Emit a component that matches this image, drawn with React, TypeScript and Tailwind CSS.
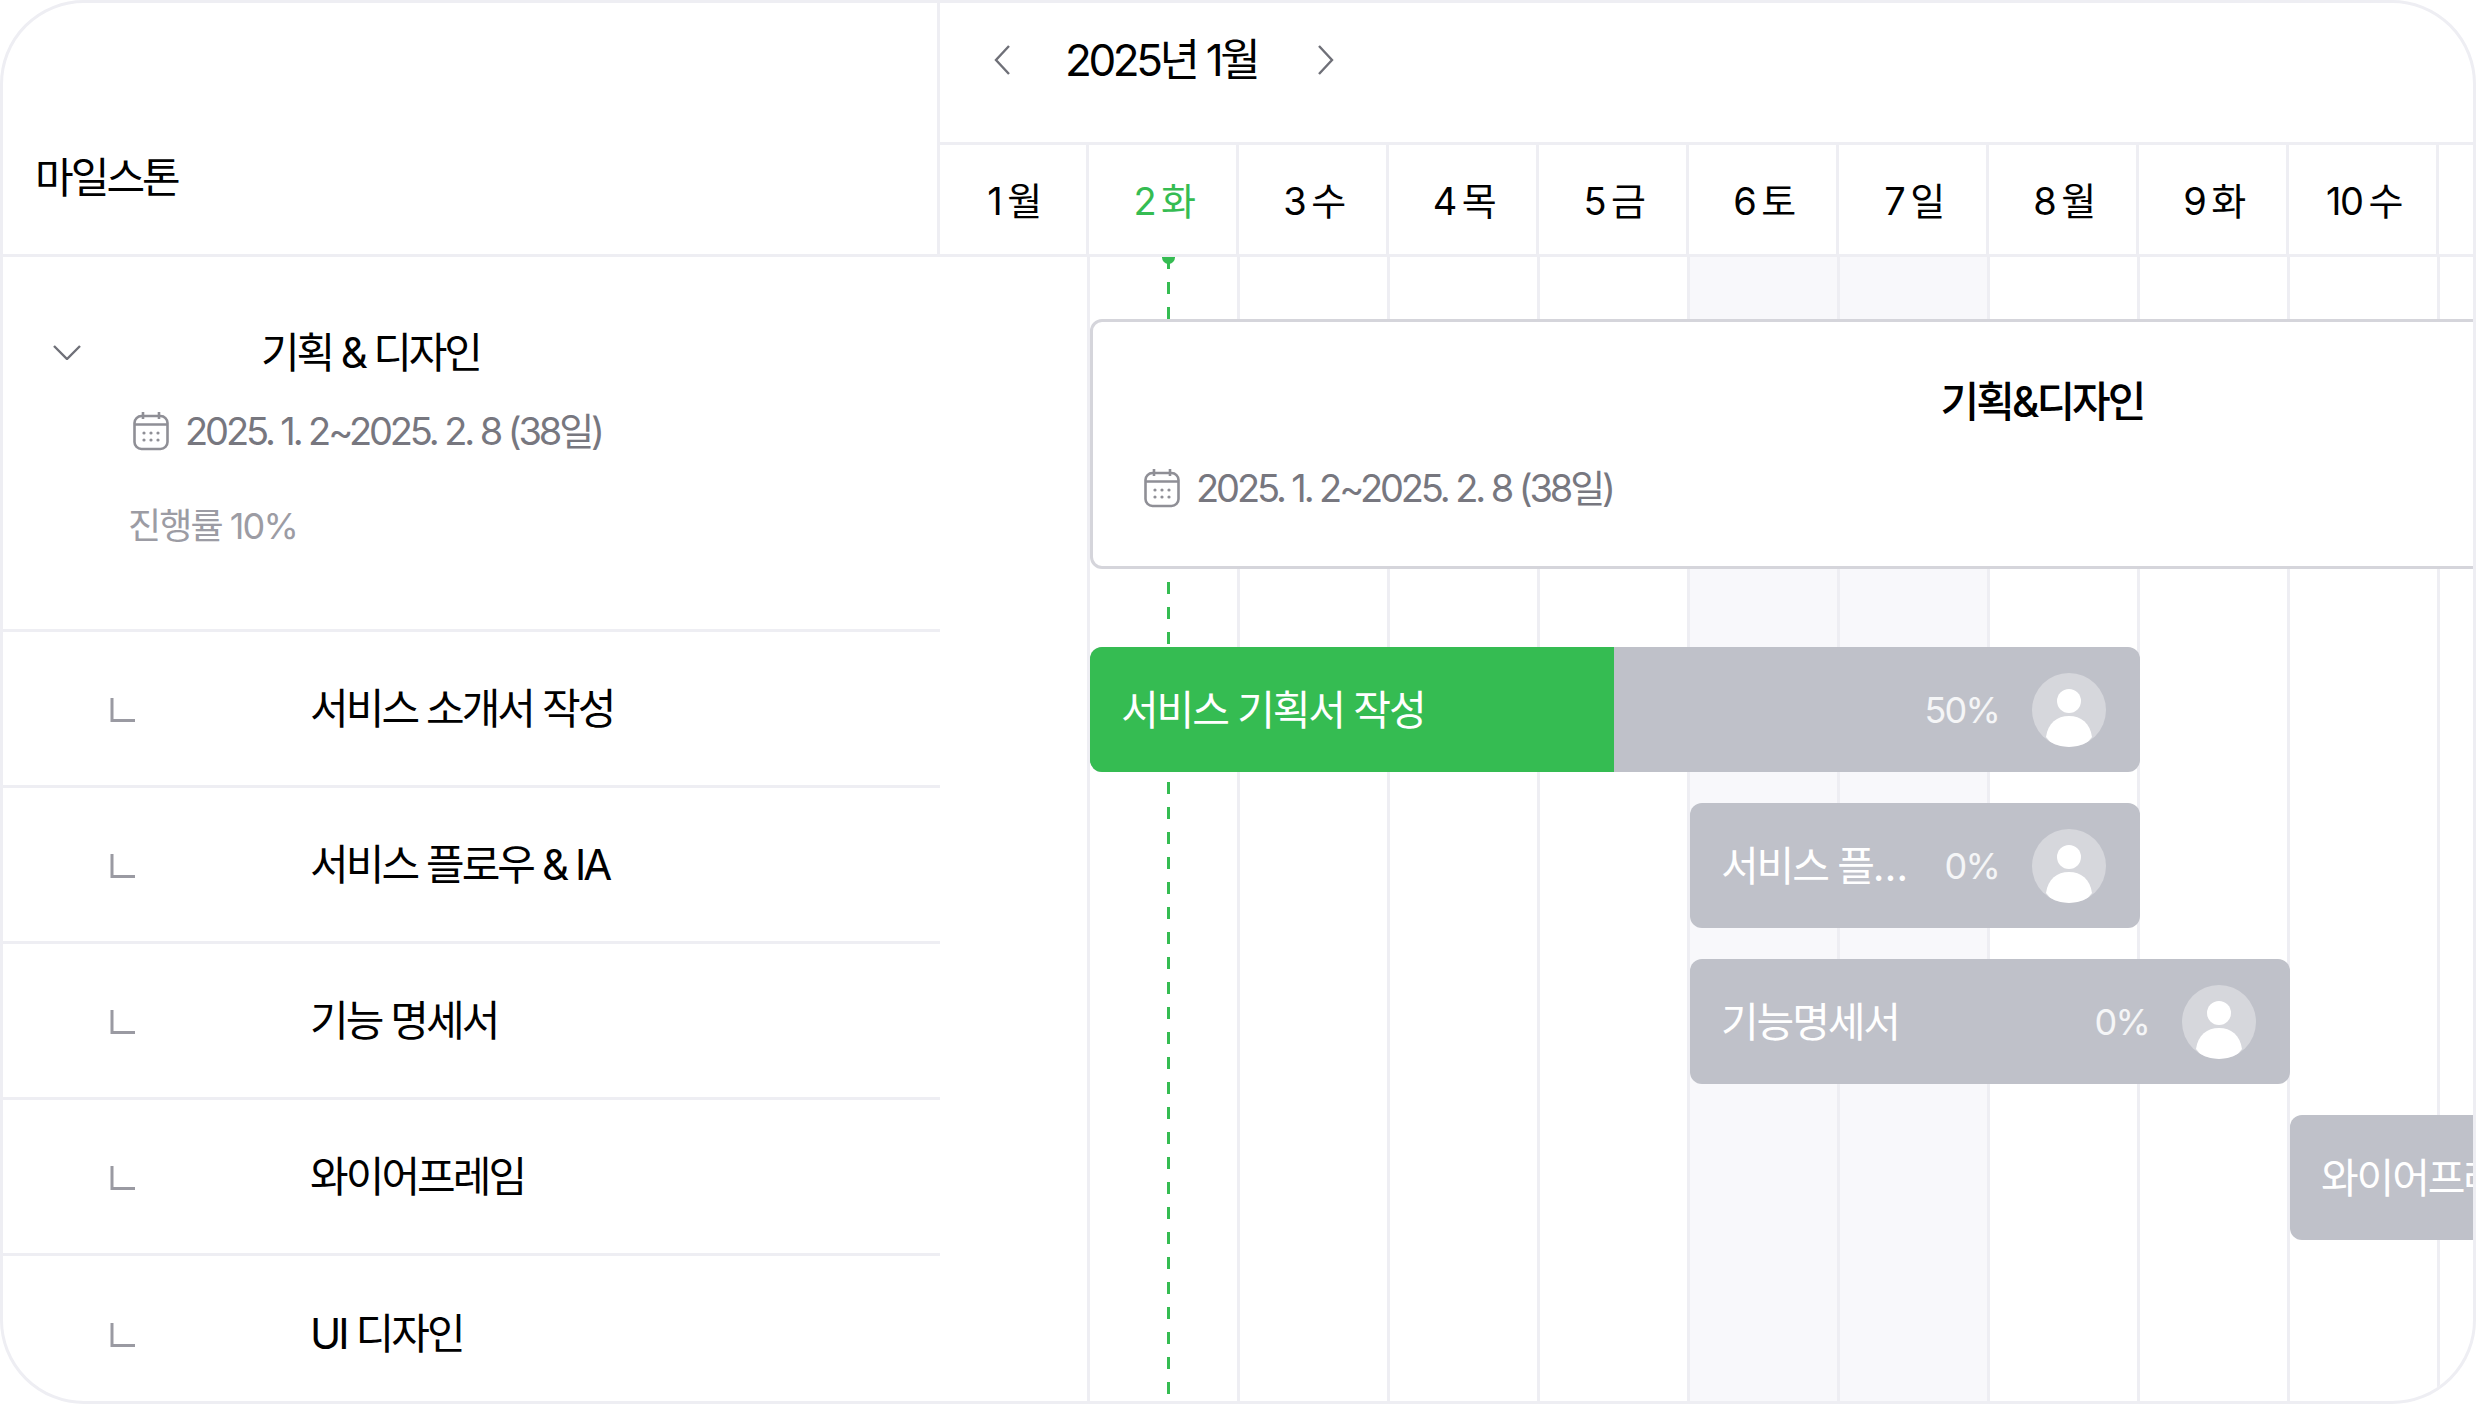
const FONT = "font-['Inter','Noto_Sans_CJK_KR',sans-serif]";

const DAYS = [
  { date: 1, label: "월" },
  { date: 2, label: "화", today: true },
  { date: 3, label: "수" },
  { date: 4, label: "목" },
  { date: 5, label: "금" },
  { date: 6, label: "토", weekend: true },
  { date: 7, label: "일", weekend: true },
  { date: 8, label: "월" },
  { date: 9, label: "화" },
  { date: 10, label: "수" },
  { date: 11, label: "" },
];

const TASKS = ["서비스 소개서 작성", "서비스 플로우 & IA", "기능 명세서", "와이어프레임", "UI 디자인"];

function CalendarIcon() {
  return (
    <svg width="36" height="40" viewBox="0 0 36 40" fill="none" stroke="#8f8f96" strokeWidth="2.6" className="shrink-0">
      <rect x="1.5" y="5" width="33" height="33" rx="7" />
      <path d="M1.5 13.5h33M10 1v7M26 1v7" />
      <g fill="#8f8f96" stroke="none">
        <circle cx="11" cy="22" r="1.6" />
        <circle cx="18" cy="22" r="1.6" />
        <circle cx="25" cy="22" r="1.6" />
        <circle cx="11" cy="29" r="1.6" />
        <circle cx="18" cy="29" r="1.6" />
        <circle cx="25" cy="29" r="1.6" />
      </g>
    </svg>
  );
}

function Chevron({ d, w, h }: { d: string; w: number; h: number }) {
  return (
    <svg width={w} height={h} viewBox={`0 0 ${w} ${h}`} fill="none" stroke="#6f7078" strokeWidth="2.4" className="shrink-0">
      <path d={d} />
    </svg>
  );
}

function Avatar() {
  return (
    <svg width="74" height="74" viewBox="0 0 74 74" className="shrink-0">
      <defs>
        <clipPath id="avatar-clip">
          <circle cx="37" cy="37" r="37" />
        </clipPath>
      </defs>
      <circle cx="37" cy="37" r="37" fill="#d6d7dc" />
      <g clipPath="url(#avatar-clip)" fill="#fff">
        <circle cx="37" cy="28" r="12" />
        <path d="M14 64c2-14 11-21 23-21s21 7 23 21l-10 12H24z" />
      </g>
    </svg>
  );
}

function Bar({
  left,
  width,
  title,
  percent,
  done,
  avatar = true,
}: {
  left: number;
  width: number;
  title: string;
  percent?: string;
  done?: number;
  avatar?: boolean;
}) {
  return (
    <div
      className="relative flex h-[125px] shrink-0 items-center overflow-hidden rounded-[12px] bg-[#bfc1c9] pl-[31px] pr-[34px] text-white"
      style={{ marginLeft: left, width }}
    >
      {done ? <div className="absolute inset-y-0 left-0 bg-[#35bc52]" style={{ width: done }} /> : null}
      <span className="relative min-w-0 flex-1 truncate text-[41px] leading-[52px] tracking-[-0.052em]">{title}</span>
      {percent ? <span className="relative ml-[24px] text-[36px] leading-none tracking-[-0.05em] text-white/85">{percent}</span> : null}
      {avatar ? (
        <span className="relative ml-[33px] shrink-0">
          <Avatar />
        </span>
      ) : null}
    </div>
  );
}

export default function App() {
  return (
    <div className={`${FONT} box-border flex h-[1404px] w-[2476px] flex-col overflow-hidden rounded-[84px] border-[3px] border-[#eeeef3] bg-white text-black`}>
      {/* header */}
      <div className="flex h-[254px] shrink-0 border-b-[3px] border-[#eeeef3]">
        <div className="flex w-[937px] shrink-0 items-center border-r-[3px] border-[#eeeef3] pl-[32px] pt-[98px] text-[42px] leading-none tracking-[-0.07em]">
          마일스톤
        </div>
        <div className="flex min-w-0 flex-1 flex-col">
          <div className="flex h-[142px] shrink-0 items-center border-b-[3px] border-[#eeeef3] pb-[26px] pl-[54px]">
            <Chevron d="M15 1 2 15l13 14" w={16} h={30} />
            <span className="ml-[55px] w-[192px] whitespace-nowrap text-[44px] leading-none tracking-[-0.077em]">2025년 1월</span>
            <span className="ml-[61px]">
              <Chevron d="M1 1l13 14L1 29" w={16} h={30} />
            </span>
          </div>
          <div className="-ml-[1px] flex min-h-0 flex-1">
            {DAYS.map((d) => (
              <div
                key={d.date}
                className={`flex h-full w-[150px] shrink-0 items-center justify-center gap-[6px] border-r-[3px] border-[#eeeef3] pl-[3px] pt-[3px] text-[38px] leading-none tracking-[-0.04em] ${
                  d.today ? "text-[#35bc52]" : "text-black"
                }`}
              >
                {d.label ? (
                  <>
                    <span>{d.date}</span>
                    <span>{d.label}</span>
                  </>
                ) : null}
              </div>
            ))}
          </div>
        </div>
      </div>

      {/* body */}
      <div className="flex min-h-0 flex-1">
        <div className="w-[937px] shrink-0">
          <div className="h-[375px] border-b-[3px] border-[#eeeef3] pt-[73px]">
            <div className="flex h-[46px] items-center">
              <span className="ml-[50px] -mt-[2px]">
                <Chevron d="M1 1l13 13L27 1" w={28} h={15} />
              </span>
              <span className="ml-[180px] text-[42px] leading-none tracking-[-0.075em]">기획 & 디자인</span>
            </div>
            <div className="ml-[130px] mt-[32px] flex h-[46px] items-center gap-[16px] text-[#77777f]">
              <CalendarIcon />
              <span className="text-[38px] leading-none tracking-[-0.082em]">2025. 1. 2~2025. 2. 8 (38일)</span>
            </div>
            <div className="ml-[125px] mt-[49px] text-[36px] leading-[46px] tracking-[-0.053em] text-[#9c9ca4]">진행률 10%</div>
          </div>
          {TASKS.map((t, i) => (
            <div
              key={t}
              className={`flex h-[156px] items-center border-[#eeeef3] ${i < TASKS.length - 1 ? "border-b-[3px]" : ""}`}
            >
              <svg width="25" height="24" viewBox="0 0 25 24" fill="none" stroke="#9a9aa2" strokeWidth="3" className="ml-[107px] mt-[2px] shrink-0">
                <path d="M2 0v22.5h23" />
              </svg>
              <span className="ml-[175px] text-[42px] leading-none tracking-[-0.07em]">{t}</span>
            </div>
          ))}
        </div>

        <div className="relative min-w-0 flex-1 overflow-hidden">
          {/* day columns sit behind the bars */}
          <div className="absolute inset-0 flex">
            {DAYS.map((d) => (
              <div
                key={d.date}
                className={`h-full w-[150px] shrink-0 border-r-[3px] border-[#eeeef3] ${d.weekend ? "bg-[#f8f8fb]" : ""}`}
              />
            ))}
          </div>

          {/* today marker */}
          <div className="absolute left-[227px] top-0 h-full w-[3px] bg-[repeating-linear-gradient(to_bottom,#35bc52_0_12px,transparent_12px_25px)]" />
          <div className="absolute left-[222px] top-0 h-[7px] w-[13px] rounded-b-full bg-[#35bc52]" />

          <div className="relative flex h-full flex-col">
            <div className="ml-[150px] mt-[62px] h-[250px] w-[1904px] shrink-0 rounded-[12px] border-[3px] border-[#d5d5db] bg-white">
              <div className="pt-[59px] text-center text-[42px] font-medium leading-none tracking-[-0.07em]">기획&디자인</div>
              <div className="ml-[51px] mt-[42px] flex h-[46px] items-center gap-[16px] text-[#77777f]">
                <CalendarIcon />
                <span className="text-[38px] leading-none tracking-[-0.082em]">2025. 1. 2~2025. 2. 8 (38일)</span>
              </div>
            </div>
            <div className="mt-[78px] flex flex-col gap-[31px]">
              <Bar left={150} width={1050} title="서비스 기획서 작성" percent="50%" done={524} />
              <Bar left={750} width={450} title="서비스 플로우 & IA" percent="0%" />
              <Bar left={750} width={600} title="기능명세서" percent="0%" />
              <Bar left={1350} width={500} title="와이어프레임" avatar={false} />
            </div>
          </div>
        </div>
      </div>
    </div>
  );
}
